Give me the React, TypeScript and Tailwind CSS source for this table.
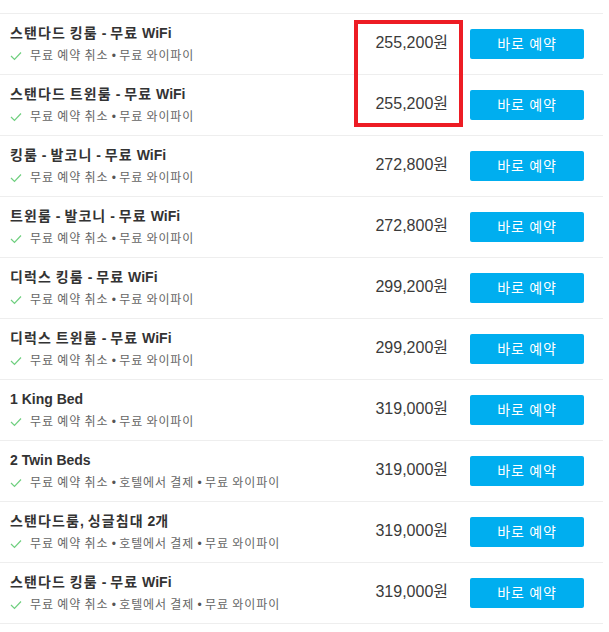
import React from 'react';

type Room = {
  name: string;
  perks: string[];
  price: string;
};

const rooms: Room[] = [
  { name: '스탠다드 킹룸 - 무료 WiFi', perks: ['무료 예약 취소', '무료 와이파이'], price: '255,200원' },
  { name: '스탠다드 트윈룸 - 무료 WiFi', perks: ['무료 예약 취소', '무료 와이파이'], price: '255,200원' },
  { name: '킹룸 - 발코니 - 무료 WiFi', perks: ['무료 예약 취소', '무료 와이파이'], price: '272,800원' },
  { name: '트윈룸 - 발코니 - 무료 WiFi', perks: ['무료 예약 취소', '무료 와이파이'], price: '272,800원' },
  { name: '디럭스 킹룸 - 무료 WiFi', perks: ['무료 예약 취소', '무료 와이파이'], price: '299,200원' },
  { name: '디럭스 트윈룸 - 무료 WiFi', perks: ['무료 예약 취소', '무료 와이파이'], price: '299,200원' },
  { name: '1 King Bed', perks: ['무료 예약 취소', '무료 와이파이'], price: '319,000원' },
  { name: '2 Twin Beds', perks: ['무료 예약 취소', '호텔에서 결제', '무료 와이파이'], price: '319,000원' },
  { name: '스탠다드룸, 싱글침대 2개', perks: ['무료 예약 취소', '호텔에서 결제', '무료 와이파이'], price: '319,000원' },
  { name: '스탠다드 킹룸 - 무료 WiFi', perks: ['무료 예약 취소', '호텔에서 결제', '무료 와이파이'], price: '319,000원' },
];

// hangul in the original is set a bit wider than Noto CJK, so space those runs out
const Wide = ({ text, className }: { text: string; className: string }) => (
  <>
    {text.split(/([\uAC00-\uD7A3]+)/).map((part, i) =>
      /[\uAC00-\uD7A3]/.test(part) ? (
        <span key={i} className={className}>{part}</span>
      ) : (
        part
      )
    )}
  </>
);

const Check = () => (
  <svg width="12" height="10" viewBox="0 0 12 10" className="shrink-0">
    <polyline points="1,5 4.5,8.5 11,1.5" fill="none" stroke="#6fcf7f" strokeWidth="1.2" />
  </svg>
);

const App: React.FC = () => {
  return (
    <div className="relative w-[609px] h-[632px] bg-white pt-[13px] font-['Liberation_Sans','Noto_Sans_CJK_KR',sans-serif]">
      <div className="w-[603px] border-t border-[#eeeeee]">
        {rooms.map((room, i) => (
          <div key={i} className="flex h-[61px] border-b border-[#eeeeee]">
            {/* NAME + PERKS */}
            <div className="flex-1 pl-[10px] pt-[9px]">
              <div className="text-[14px] leading-[20px] font-bold text-[#333333] whitespace-nowrap">
                <Wide text={room.name} className="tracking-[1.1px]" />
              </div>
              <div className="mt-[4px] flex items-center h-[18px] text-[12px] text-[#666666] whitespace-nowrap">
                <Check />
                <span className="ml-[8px]">
                  {room.perks.map((p, j) => (
                    <React.Fragment key={j}>
                      {j > 0 && <span className="text-[#555555]"> • </span>}
                      <Wide text={p} className="tracking-[0.9px]" />
                    </React.Fragment>
                  ))}
                </span>
              </div>
            </div>

            {/* PRICE */}
            <div className="self-center text-[16px] text-[#3a3a3a] leading-[20px] -mt-[2px]">
              {room.price}
            </div>

            {/* BUTTON */}
            <button className="self-center ml-[22px] mr-[19px] w-[114px] h-[30px] rounded-[2px] bg-[#00aeef] text-white text-[14px] tracking-[0.8px]">
              바로 예약
            </button>
          </div>
        ))}
      </div>

      {/* highlight box */}
      <div className="absolute left-[354px] top-[20px] w-[109px] h-[107px] border-4 border-[#ed1c24]" />
    </div>
  );
};

export default App;
